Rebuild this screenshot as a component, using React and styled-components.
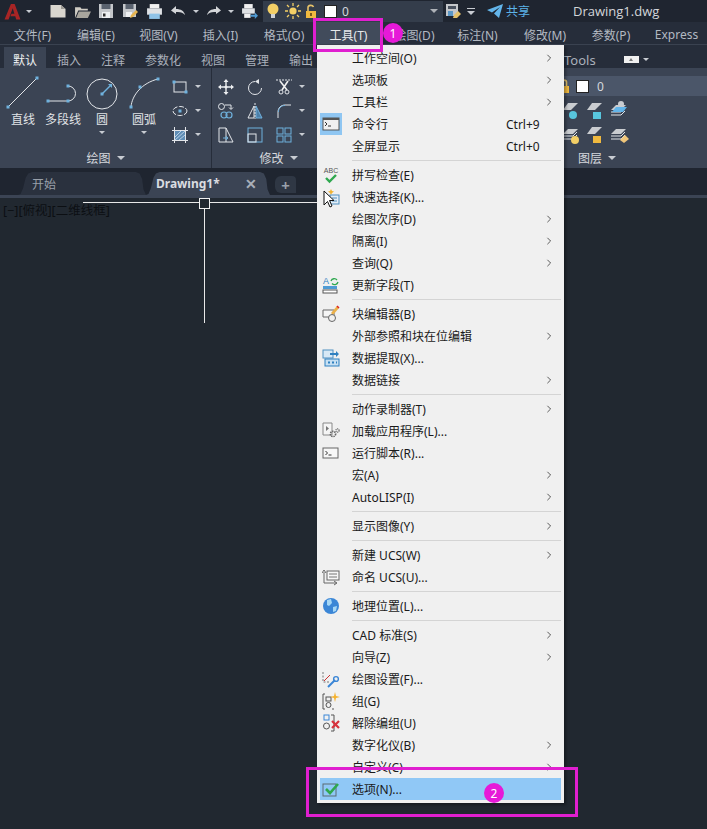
import React from "react";
import styled, { createGlobalStyle } from "styled-components";

const GlobalStyle = createGlobalStyle`
    html, body {
        margin: 0;
        padding: 0;
        background: #212830;
    }
    * {
        box-sizing: border-box;
    }
`;

const Page = styled.div`
    position: relative;
    width: 707px;
    height: 829px;
    overflow: hidden;
    display: flex;
    flex-direction: column;
    background: #212830;
    font-family: "Noto Sans", "Noto Sans CJK SC", sans-serif;
    font-size: 12px;
    color: #c9ced6;
`;

/* ---------- title bar ---------- */
const TitleBar = styled.div`
    height: 22px;
    flex: none;
    display: flex;
    align-items: center;
    background: #1f2530;
`;
const LogoBox = styled.div`
    width: 50px;
    padding-left: 4px;
    display: flex;
    align-items: center;
    gap: 5px;
`;
const Quick = styled.div`
    display: flex;
    align-items: center;
    width: ${(p) => p.$w || 24}px;
`;
const Caret = styled.span`
    display: inline-block;
    flex: none;
    width: 0;
    height: 0;
    margin-left: ${(p) => p.$ml || 0}px;
    border-left: ${(p) => p.$s || 3}px solid transparent;
    border-right: ${(p) => p.$s || 3}px solid transparent;
    border-top: ${(p) => p.$s || 3}px solid ${(p) => p.$c || "#c8ccd2"};
`;
const BigCaret = styled(Caret)`
    margin-top: 3px;
`;
const BarCaret = styled.span`
    display: block;
    width: 8px;
    height: 7px;
    border-top: 1px solid #c8ccd2;
    &::after {
        content: "";
        display: block;
        width: 0;
        height: 0;
        margin-top: 2px;
        border-left: 4px solid transparent;
        border-right: 4px solid transparent;
        border-top: 4px solid #c8ccd2;
    }
`;
const LayerCombo = styled.div`
    width: 180px;
    height: 21px;
    margin-right: 2px;
    padding: 0 5px 0 2px;
    display: flex;
    align-items: center;
    background: #343d4b;
    color: #d5d8dd;
`;
const Swatch = styled.span`
    display: block;
    flex: none;
    width: 13px;
    height: 13px;
    background: #fff;
    border: 1px solid #222;
`;
const ComboValue = styled.span`
    flex: 1;
    padding-left: 5px;
`;
const ShareLabel = styled.span`
    color: #5cb3e8;
    width: 70px;
    padding-left: 3px;
`;
const FileName = styled.span`
    font-size: 13px;
    color: #d3d6da;
    font-family: "Open Sans", "Noto Sans", sans-serif;
`;

/* ---------- menu bar ---------- */
const MenuBar = styled.div`
    height: 23px;
    flex: none;
    display: flex;
    align-items: stretch;
    padding-left: 1px;
    background: #262d3a;
    border-bottom: 1px solid #3a4250;
`;
const MenuEntry = styled.div`
    display: flex;
    align-items: center;
    justify-content: center;
    white-space: nowrap;
    padding-top: 3px;
    width: ${(p) => p.$w}px;
    flex: none;
    color: ${(p) => (p.$active ? "#e6e8eb" : "#b3b9c2")};
    background: ${(p) => (p.$active ? "#414b5b" : "transparent")};
`;

/* ---------- ribbon ---------- */
const RibbonTabs = styled.div`
    height: 23px;
    flex: none;
    display: flex;
    gap: 2px;
    padding: 2px 0 0 4px;
    background: #262d3a;
`;
const RibbonTab = styled.div`
    padding: 4px 9px 0;
    display: flex;
    align-items: center;
    white-space: nowrap;
    color: ${(p) => (p.$active ? "#eef0f2" : "#aab0ba")};
    background: ${(p) => (p.$active ? "#3b4454" : "transparent")};
`;
const TabsTail = styled.div`
    margin-left: auto;
    width: 143px;
    padding-top: 4px;
    display: flex;
    align-items: center;
    color: #aab0ba;
    font-size: 13px;
`;
const MiniPill = styled.span`
    display: flex;
    align-items: center;
    justify-content: center;
    width: 15px;
    height: 7px;
    margin: 0 4px 0 28px;
    background: #f0f0f0;
    &::after {
        content: "";
        border-left: 2px solid transparent;
        border-right: 2px solid transparent;
        border-bottom: 3px solid #777;
    }
`;
const Ribbon = styled.div`
    height: 100px;
    flex: none;
    display: flex;
    background: #3b4454;
`;
const Panel = styled.div`
    width: ${(p) => p.$w}px;
    flex: none;
    display: flex;
    flex-direction: column;
    border-right: ${(p) => (p.$divider ? "1px solid #262d3a" : "none")};
`;
const PanelBody = styled.div`
    flex: 1;
    display: flex;
    align-items: flex-start;
    padding-left: ${(p) => p.$pl || 0}px;
`;
const PanelTitle = styled.div`
    height: 20px;
    flex: none;
    display: flex;
    align-items: center;
    justify-content: ${(p) => (p.$start ? "flex-start" : "center")};
    gap: 6px;
    color: #d5d8dd;
    padding-left: ${(p) => p.$pl || 0}px;
`;
const BigTool = styled.div`
    width: ${(p) => p.$w}px;
    flex: none;
    display: flex;
    flex-direction: column;
    align-items: center;
    padding-top: 6px;
    color: #e0e3e6;
    white-space: nowrap;
    line-height: 16px;
`;
const BigIcon = styled.svg`
    display: block;
    width: 40px;
    height: 38px;
`;
const SmallGrid = styled.div`
    display: grid;
    grid-template-columns: repeat(${(p) => p.$cols}, auto);
    column-gap: ${(p) => p.$gap || 0}px;
    row-gap: 7px;
    padding-top: 10px;
    margin-left: ${(p) => p.$ml || 0}px;
`;
const SmallTool = styled.div`
    display: flex;
    align-items: center;
    gap: 7px;
    height: 17px;
`;
const Ic = styled.svg`
    display: block;
    flex: none;
    width: ${(p) => p.$size || 16}px;
    height: ${(p) => p.$size || 16}px;
`;
const Spacer = styled.div`
    flex: 1;
`;
const LayerRow = styled.div`
    margin-top: 8px;
    height: 20px;
    flex: none;
    display: flex;
    align-items: center;
    gap: 5px;
    background: #4b5669;
    color: #d5d8dd;
    & > svg {
        margin-left: -7px;
    }
`;
const LayerIcons = styled.div`
    flex: 1;
    display: grid;
    grid-template-columns: repeat(3, 24px);
    grid-auto-rows: 24px;
    margin-left: -3px;
    padding-top: 3px;
    align-items: center;
    justify-items: center;
`;

/* ---------- document tabs ---------- */
const DocTabs = styled.div`
    height: 27px;
    flex: none;
    display: flex;
    align-items: flex-end;
    padding-left: 18px;
    background: #1f2530;
`;
const DocTab = styled.div`
    height: 23px;
    width: ${(p) => p.$w}px;
    flex: none;
    display: flex;
    align-items: center;
    gap: 25px;
    padding-left: ${(p) => p.$pl}px;
    background: ${(p) => (p.$active ? "#3b4454" : "#2a313e")};
    color: ${(p) => (p.$active ? "#d9dce0" : "#99a0aa")};
    font-weight: ${(p) => (p.$active ? 700 : 400)};
    clip-path: polygon(0 100%, 2% 96%, 4% 70%, 6% 25%, 8% 6%, 11% 0, 92% 0, 95% 6%, 97% 30%, 98% 75%, 100% 100%);
`;
const CloseMark = styled.span`
    font-size: 14px;
    font-weight: 700;
    color: #a9afb8;
`;
const PlusTab = styled.div`
    height: 17px;
    width: 21px;
    margin: 0 0 2px 5px;
    display: flex;
    align-items: center;
    justify-content: center;
    border-radius: 6px 4px 0 6px;
    background: #2f3744;
    color: #9aa1ab;
    font-size: 15px;
    font-weight: 700;
`;
const TabStrip = styled.div`
    height: 3px;
    flex: none;
    background: #3b4454;
`;

/* ---------- canvas ---------- */
const Canvas = styled.div`
    flex: 1;
    position: relative;
    background: #212830;
`;
const ViewLabel = styled.div`
    padding: 5px 0 0 3px;
    color: #0c0f13;
    font-size: 12.5px;
    line-height: 16px;
`;
const CrossH = styled.div`
    position: absolute;
    left: 83px;
    top: 4px;
    width: 240px;
    height: 1px;
    background: #e8e8e8;
`;
const CrossV = styled.div`
    position: absolute;
    left: 204px;
    top: 5px;
    width: 1px;
    height: 120px;
    background: #e8e8e8;
`;
const PickBox = styled.div`
    position: absolute;
    left: 199px;
    top: 0;
    width: 11px;
    height: 11px;
    border: 1px solid #f0f0f0;
    background: #212830;
`;

/* ---------- drop-down menu ---------- */
const Dropdown = styled.div`
    position: absolute;
    left: 317px;
    top: 45px;
    width: 247px;
    height: 758px;
    padding: 2px 3px;
    background: #f0f0f0;
    color: #1a1a1a;
    box-shadow: 2px 2px 3px rgba(0, 0, 0, 0.35);
`;
const Item = styled.div`
    height: 22px;
    display: flex;
    align-items: center;
    background: ${(p) => (p.$hot ? "#90c8f6" : "transparent")};
`;
const ItemIcon = styled.div`
    width: 32px;
    flex: none;
    display: flex;
    justify-content: center;
    padding-right: 10px;
`;
const ItemLabel = styled.span`
    flex: 1;
    white-space: nowrap;
`;
const ItemShortcut = styled.span`
    width: 55px;
    flex: none;
`;
const ItemArrow = styled.span`
    width: 16px;
    flex: none;
    display: flex;
`;
const Separator = styled.div`
    height: 1px;
    margin: 3px 0 3px 32px;
    background: #d4d4d4;
`;

/* ---------- annotations ---------- */
const Callout = styled.div`
    position: absolute;
    left: ${(p) => p.$x}px;
    top: ${(p) => p.$y}px;
    width: ${(p) => p.$w}px;
    height: ${(p) => p.$h}px;
    border: 3px solid #e01fd0;
`;
const Badge = styled.div`
    position: absolute;
    left: ${(p) => p.$x}px;
    top: ${(p) => p.$y}px;
    width: 20px;
    height: 20px;
    border-radius: 50%;
    display: flex;
    align-items: center;
    justify-content: center;
    background: #e619d8;
    color: #fff;
    font-size: 12px;
`;
const Pointer = styled.svg`
    position: absolute;
    left: 323px;
    top: 190px;
    width: 12px;
    height: 18px;
`;

/* ---------- icons ---------- */
const S = { fill: "none", stroke: "#e3e6ea", strokeWidth: 1 };
const B = "#6fb1dd";
const Dot = ({ x, y }) => <rect x={x - 1.5} y={y - 1.5} width="3" height="3" fill={B} />;

const Logo = () => (
    <Ic viewBox="0 0 16 16" $size={17}>
        <path d="M0.5 15.5 L6.5 1 H10 L15.5 15.5 H11.5 L10.6 12.5 H6 L7 10 H9.8 L8.2 5 L4.3 15.5 Z" fill="#a82525" />
    </Ic>
);
const NewIcon = () => (
    <Ic viewBox="0 0 16 16"><path d="M0.5 2 H11 L15.5 6 V14.5 H0.5 Z" fill="#d9d6cf" /><path d="M11 2 V6 H15.5" fill="#9c9a94" /></Ic>
);
const OpenIcon = () => (
    <Ic viewBox="0 0 16 16" $size={17}><path d="M1 4 H6 L7 5.5 H13 V7 H4 L1 14 Z" fill="#cfccc4" /><path d="M4.5 8 H16 L13 14 H2 Z" fill="#a8a59d" /></Ic>
);
const SaveIcon = () => (
    <Ic viewBox="0 0 16 16"><path d="M1 1 H15 V15 H1 Z" fill="#c4c7cb" /><rect x="3.5" y="1" width="9" height="5" fill="#59626f" /><rect x="4" y="9" width="8" height="6" fill="#eef0f2" /><rect x="5" y="10.5" width="2.5" height="3" fill="#333" /></Ic>
);
const SaveAsIcon = () => (
    <Ic viewBox="0 0 16 16"><path d="M1 1 H14 V14 H1 Z" fill="#c4c7cb" /><rect x="3.5" y="1" width="8" height="5" fill="#59626f" /><rect x="4" y="9" width="6" height="5" fill="#eef0f2" /><path d="M8 15 L9 12 L14 7 L16 9 L11 14 Z" fill="#e6b450" /></Ic>
);
const PlotIcon = () => (
    <Ic viewBox="0 0 16 16" $size={17}><rect x="3.5" y="1" width="9" height="4" fill="#f1f1f1" /><rect x="1" y="5" width="14" height="6" fill="#dfe2e5" /><rect x="3" y="10" width="10" height="5" fill="#8fc3e8" /></Ic>
);
const UndoIcon = () => (
    <Ic viewBox="0 0 16 16"><path d="M6 3 L1 7.5 L6 11 V9 C10 8.5 13 9.5 15 12 C14 8 11 6 6 6 Z" fill="#d4d6d9" /></Ic>
);
const RedoIcon = () => (
    <Ic viewBox="0 0 16 16"><path d="M10 3 L15 7.5 L10 11 V9 C6 8.5 3 9.5 1 12 C2 8 5 6 10 6 Z" fill="#d4d6d9" /></Ic>
);
const PreviewIcon = () => (
    <Ic viewBox="0 0 16 16" $size={17}><rect x="3" y="1" width="8" height="4" fill="#f1f1f1" /><rect x="1" y="5" width="12" height="5" fill="#dfe2e5" /><rect x="3" y="10" width="6" height="4" fill="#f1f1f1" /><path d="M9 11 H13 V9 L16 12 L13 15 V13 H9 Z" fill="#4f9bd4" /></Ic>
);
const BulbIcon = () => (
    <Ic viewBox="0 0 16 16"><circle cx="8" cy="6" r="5.5" fill="#f3cf66" /><rect x="6" y="11" width="4" height="4" fill="#cfd2d6" /></Ic>
);
const SunIcon = () => (
    <Ic viewBox="0 0 16 16"><circle cx="8" cy="8" r="3.6" fill="#f3cf66" /><path d="M8 0 V3 M8 13 V16 M0 8 H3 M13 8 H16 M2 2 L4 4 M12 12 L14 14 M14 2 L12 4 M4 12 L2 14" stroke="#f3cf66" strokeWidth="1.3" /></Ic>
);
const LockIcon = () => (
    <Ic viewBox="0 0 14 14" $size={14}><path d="M3 7 V3.5 C3 1 7.5 0.5 8.5 3" fill="none" stroke="#e6c26a" strokeWidth="1.6" /><rect x="1" y="7" width="10" height="7" fill="#f0b93f" /><rect x="5" y="9" width="2" height="3" fill="#7a5a1c" /></Ic>
);
const LayerLockIcon = () => (
    <Ic viewBox="0 0 14 14" $size={14}><path d="M4 7 V3 C4 0.5 9.5 0.5 9.5 3 V7" fill="none" stroke="#e6c26a" strokeWidth="1.6" /><rect x="2" y="7" width="10" height="7" fill="#f0b93f" /></Ic>
);
const SaveEditIcon = () => (
    <Ic viewBox="0 0 16 16"><rect x="1" y="1" width="12" height="12" fill="#c4c7cb" /><rect x="3" y="3" width="8" height="3" fill="#49525f" /><rect x="3" y="8" width="5" height="5" fill="#5b97c5" /><path d="M8 15 L9 12 L13 8 L16 11 L12 15 Z" fill="#e6c26a" /></Ic>
);
const ShareIcon = () => (
    <Ic viewBox="0 0 16 16"><path d="M0 7 L16 1 L12 15 L7 10.5 L13 4 L5 9.5 Z" fill="#63b5ea" /></Ic>
);
const LineIcon = () => (
    <BigIcon viewBox="0 0 40 38"><path d="M5 33 L34 4" {...S} /><Dot x={5} y={33} /><Dot x={34} y={4} /></BigIcon>
);
const PolylineIcon = () => (
    <BigIcon viewBox="0 0 40 38"><path d="M5 27 H25 A7.5 7.5 0 0 0 25 12" {...S} /><Dot x={5} y={27} /><Dot x={25} y={27} /><Dot x={25} y={12} /></BigIcon>
);
const CircleIcon = () => (
    <BigIcon viewBox="0 0 40 38"><circle cx="20" cy="20" r="15" {...S} /><path d="M20 20 L29 11" stroke={B} strokeWidth="1.4" /><path d="M26 10 H30 V14 Z" fill={B} /><Dot x={20} y={20} /></BigIcon>
);
const ArcIcon = () => (
    <BigIcon viewBox="0 0 40 38"><path d="M7 33 C8 21 18 9 34 5" {...S} /><Dot x={7} y={33} /><Dot x={16} y={13} /><Dot x={34} y={5} /></BigIcon>
);
const RectIcon = () => (
    <Ic viewBox="0 0 16 16"><rect x="2" y="3" width="12" height="10" {...S} /><Dot x={2} y={3} /><Dot x={14} y={13} /></Ic>
);
const EllipseIcon = () => (
    <Ic viewBox="0 0 16 16"><ellipse cx="8" cy="8" rx="7" ry="4.5" {...S} strokeDasharray="5 1.5" /><Dot x={8} y={8} /></Ic>
);
const HatchIcon = () => (
    <Ic viewBox="0 0 16 16"><path d="M3 4 H13 V13 H3 Z" fill="#5f8db5" /><path d="M3 10 L9 4 M3 13 L13 4 M7 13 L13 8" stroke="#cfe2f2" strokeWidth="0.8" /><path d="M0 3.5 H16 M0 13.5 H16 M2.5 0 V16 M13.5 0 V16" {...S} /></Ic>
);
const MoveIcon = () => (
    <Ic viewBox="0 0 16 16"><path d="M8 2 V14 M2 8 H14" stroke="#eceef0" strokeWidth="1.4" /><path d="M8 0 L10.5 3 H5.5 Z M8 16 L10.5 13 H5.5 Z M0 8 L3 5.5 V10.5 Z M16 8 L13 5.5 V10.5 Z" fill="#eceef0" /><circle cx="8" cy="8" r="1.5" fill="#eceef0" /></Ic>
);
const RotateIcon = () => (
    <Ic viewBox="0 0 16 16"><path d="M8 2.5 A6.5 6.5 0 1 0 14.5 9" {...S} /><path d="M12 0 L8 2.5 L12 5 Z" fill="#e3e6ea" /></Ic>
);
const TrimIcon = () => (
    <Ic viewBox="0 0 16 16"><path d="M0 1 H16" stroke="#e3e6ea" strokeDasharray="2 1" /><path d="M4 2 L11 11 M12 2 L6 11" stroke="#f0f0f0" strokeWidth="1.6" /><circle cx="5" cy="13" r="2" {...S} /><circle cx="11" cy="13" r="2" {...S} /></Ic>
);
const CopyIcon = () => (
    <Ic viewBox="0 0 16 16"><circle cx="3.5" cy="3.5" r="3" {...S} /><path d="M7 2 H13 V6 M11 4.5 L13 6.5 L15 4.5" {...S} /><circle cx="6" cy="12" r="3" stroke={B} fill="none" strokeWidth="1.2" /><circle cx="11" cy="12" r="3" stroke={B} fill="none" strokeWidth="1.2" /></Ic>
);
const MirrorIcon = () => (
    <Ic viewBox="0 0 16 16"><path d="M7 3 L1 15 H7 Z" {...S} /><path d="M9 3 L15 15 H9 Z" fill="#4d7fa8" stroke={B} /><path d="M8 0 V16" stroke="#e3e6ea" strokeDasharray="2 1" /></Ic>
);
const FilletIcon = () => (
    <Ic viewBox="0 0 16 16"><path d="M2 15 V9 C2 5 5 2 9 2 H15" {...S} /><path d="M2.5 9 C2.5 5 5 2.5 9 2.5" stroke={B} fill="none" /></Ic>
);
const StretchIcon = () => (
    <Ic viewBox="0 0 16 16"><path d="M1 1 H8 V15 H1 Z M8 1 L15 15 H8" {...S} /><path d="M5 11 H10 M8 9 L10 11 L8 13" stroke={B} fill="none" /></Ic>
);
const ScaleIcon = () => (
    <Ic viewBox="0 0 16 16"><rect x="1" y="1" width="14" height="14" stroke={B} fill="none" /><rect x="1" y="7" width="8" height="8" {...S} /></Ic>
);
const ArrayIcon = () => (
    <Ic viewBox="0 0 16 16"><rect x="1" y="1" width="6" height="6" stroke={B} fill="none" /><rect x="9" y="1" width="6" height="6" stroke={B} fill="none" /><rect x="1" y="9" width="6" height="6" stroke={B} fill="none" /><rect x="9" y="9" width="6" height="6" stroke={B} fill="none" /></Ic>
);
const LayerTop = ({ children }) => (
    <Ic viewBox="0 0 20 20" $size={20}><path d="M5 2 H15 L8 9 H0 Z" fill="#c9ccd0" />{children}</Ic>
);
const LayerStack = ({ children }) => (
    <Ic viewBox="0 0 20 20" $size={20}><path d="M5 4 H15 L10 9 H0 Z" fill="#c9ccd0" /><path d="M0 11 H10 L14 7 M0 14 H10 L14 10" stroke="#e3e6ea" fill="none" />{children}</Ic>
);

const CmdIcon = () => (
    <Ic viewBox="0 0 22 22" $size={22}><rect width="22" height="22" fill="#8fc6f2" /><rect x="3" y="5" width="16" height="12" fill="#f0f0f0" stroke="#555" /><rect x="3" y="5" width="16" height="2" fill="#555" /><path d="M5 9 L7 11 L5 13 M8 13 H11" stroke="#333" fill="none" /></Ic>
);
const SpellIcon = () => (
    <Ic viewBox="0 0 18 18" $size={18}><text x="9" y="7" textAnchor="middle" fontSize="7" fontFamily="Liberation Sans, sans-serif" fill="#555">ABC</text><path d="M4 12 L7.5 15.5 L14 9" stroke="#2fa84f" strokeWidth="2.4" fill="none" /></Ic>
);
const QuickSelIcon = () => (
    <Ic viewBox="0 0 18 18" $size={18}><path d="M9 1 L10 3 L12 3.5 L10 5 L9 7 L8 5 L6 3.5 L8 3 Z" fill="#f1b433" /><rect x="8" y="7" width="9" height="9" fill="#e4eef6" stroke="#4f8fc0" /><path d="M10 10 H15 M10 13 H15" stroke="#4f8fc0" /></Ic>
);
const FieldIcon = () => (
    <Ic viewBox="0 0 18 18" $size={18}><text x="1" y="8" fontSize="9" fontFamily="Liberation Sans, sans-serif" fill="#2f80c0">A</text><path d="M9 5 A3.5 3.5 0 0 1 15 4 M16 6 A3.5 3.5 0 0 1 10 7.5" stroke="#2fa84f" strokeWidth="1.3" fill="none" /><rect x="1" y="10" width="14" height="3" fill="#4f9bd4" /><rect x="1" y="14" width="14" height="3" fill="#fff" stroke="#555" /></Ic>
);
const BlockIcon = () => (
    <Ic viewBox="0 0 18 18" $size={18}><path d="M1 5 H12 V12 H1 Z" fill="#f5f5f5" stroke="#666" /><path d="M9 8 L15 1 L17 3 L11 10 Z" fill="#eab04a" /><path d="M15 1 L17 3" stroke="#d22" strokeWidth="1.5" /><circle cx="10" cy="13" r="3.5" fill="#f0f0f0" stroke="#666" /></Ic>
);
const ExtractIcon = () => (
    <Ic viewBox="0 0 18 18" $size={18}><rect x="1" y="1" width="10" height="8" fill="#d7e8f5" stroke="#4f8fc0" /><path d="M8 4 H14 V2 L17 5 L14 8 V6 H8 Z" fill="#2f80c0" /><rect x="3" y="10" width="14" height="7" fill="#c7e0f3" stroke="#2f80c0" /><path d="M6 13.5 H8 M10 13.5 H12 M14 13.5 H15" stroke="#2f80c0" strokeWidth="2" /></Ic>
);
const AppLoadIcon = () => (
    <Ic viewBox="0 0 18 18" $size={18}><path d="M1 1 H10 V13 H1 Z" fill="#f5f5f5" stroke="#888" /><path d="M4 4 L7 6.5 L4 9 Z" fill="#777" /><circle cx="11" cy="12" r="2.6" fill="none" stroke="#666" strokeWidth="1.6" strokeDasharray="1.4 0.8" /><circle cx="15.5" cy="8.5" r="1.6" fill="none" stroke="#666" strokeWidth="1.2" strokeDasharray="1 0.6" /></Ic>
);
const ScriptIcon = () => (
    <Ic viewBox="0 0 18 18" $size={18}><rect x="1" y="4" width="15" height="10" fill="#f7f7f7" stroke="#666" /><path d="M3.5 7 L5.5 9 L3.5 11 M6.5 11 H9.5" stroke="#333" fill="none" /></Ic>
);
const UcsIcon = () => (
    <Ic viewBox="0 0 18 18" $size={18}><path d="M2 4 V15 H14" stroke="#666" fill="none" /><path d="M0 5 L2 2 L4 5 M12 13 L15 15 L12 17" stroke="#666" fill="none" /><rect x="5" y="3" width="12" height="9" fill="#f7f7f7" stroke="#666" /><path d="M7 6 H15 M7 9 H15" stroke="#777" /></Ic>
);
const GlobeIcon = () => (
    <Ic viewBox="0 0 18 18" $size={18}><circle cx="9" cy="9" r="8" fill="#3b86d6" /><path d="M5 3 L9 2 L10 6 L7 9 L5 8 Z M11 10 L15 9 L14 14 L11 15 Z" fill="#a6d7f5" /></Ic>
);
const SettingsIcon = () => (
    <Ic viewBox="0 0 18 18" $size={18}><path d="M1 2 V12 H8" stroke="#777" strokeDasharray="2 1.5" fill="none" /><path d="M2 11 L8 5" stroke="#c33" /><path d="M6 17 L13 10" stroke="#3b86d6" strokeWidth="2" /><circle cx="14" cy="9" r="2.4" fill="none" stroke="#3b86d6" strokeWidth="1.4" /></Ic>
);
const GroupIcon = () => (
    <Ic viewBox="0 0 18 18" $size={18}><path d="M3 2 H1 V17 H3 M10 17 H12" stroke="#555" fill="none" /><rect x="4" y="5" width="5" height="4" fill="none" stroke="#555" /><circle cx="6.5" cy="13" r="2.5" fill="none" stroke="#555" /><path d="M13 0 L14 4 L18 5 L14 6 L13 10 L12 6 L8 5 L12 4 Z" fill="#f5b22e" /></Ic>
);
const UngroupIcon = () => (
    <Ic viewBox="0 0 18 18" $size={18}><rect x="2" y="1" width="5" height="5" fill="none" stroke="#3b86d6" /><circle cx="4.5" cy="12" r="3" fill="none" stroke="#555" /><path d="M9 1 H12 V17 H9" stroke="#555" fill="none" /><path d="M10 7 L17 14 M17 7 L10 14" stroke="#d8323c" strokeWidth="2.2" /></Ic>
);
const OptionsIcon = () => (
    <Ic viewBox="0 0 18 18" $size={18}><rect x="1" y="4" width="13" height="12" fill="none" stroke="#5a6a72" /><path d="M4 9 L8 13 L16 4" stroke="#2fa84f" strokeWidth="2.6" fill="none" /></Ic>
);
const ChevronIcon = () => (
    <Ic viewBox="0 0 6 10" $size={8}><path d="M1 1 L5 5 L1 9" stroke="#333" fill="none" /></Ic>
);

const menuEntries = [
    { label: "文件(F)", w: 63 },
    { label: "编辑(E)", w: 64 },
    { label: "视图(V)", w: 61 },
    { label: "插入(I)", w: 63 },
    { label: "格式(O)", w: 64 },
    { label: "工具(T)", w: 65, active: true },
    { label: "绘图(D)", w: 67 },
    { label: "标注(N)", w: 59 },
    { label: "修改(M)", w: 76 },
    { label: "参数(P)", w: 56 },
    { label: "Express", w: 75 },
];
const ribbonTabs = ["默认", "插入", "注释", "参数化", "视图", "管理", "输出"];
const drawSmall = [RectIcon, EllipseIcon, HatchIcon];
const modifySmall = [
    [MoveIcon, false], [RotateIcon, false], [TrimIcon, true],
    [CopyIcon, false], [MirrorIcon, false], [FilletIcon, true],
    [StretchIcon, false], [ScaleIcon, false], [ArrayIcon, true],
];

const menuGroups = [
    [
        { label: "工作空间(O)", arrow: true },
        { label: "选项板", arrow: true },
        { label: "工具栏", arrow: true },
        { label: "命令行", shortcut: "Ctrl+9", icon: CmdIcon },
        { label: "全屏显示", shortcut: "Ctrl+0" },
    ],
    [
        { label: "拼写检查(E)", icon: SpellIcon },
        { label: "快速选择(K)...", icon: QuickSelIcon },
        { label: "绘图次序(D)", arrow: true },
        { label: "隔离(I)", arrow: true },
        { label: "查询(Q)", arrow: true },
        { label: "更新字段(T)", icon: FieldIcon },
    ],
    [
        { label: "块编辑器(B)", icon: BlockIcon },
        { label: "外部参照和块在位编辑", arrow: true },
        { label: "数据提取(X)...", icon: ExtractIcon },
        { label: "数据链接", arrow: true },
    ],
    [
        { label: "动作录制器(T)", arrow: true },
        { label: "加载应用程序(L)...", icon: AppLoadIcon },
        { label: "运行脚本(R)...", icon: ScriptIcon },
        { label: "宏(A)", arrow: true },
        { label: "AutoLISP(I)", arrow: true },
    ],
    [{ label: "显示图像(Y)", arrow: true }],
    [
        { label: "新建 UCS(W)", arrow: true },
        { label: "命名 UCS(U)...", icon: UcsIcon },
    ],
    [{ label: "地理位置(L)...", icon: GlobeIcon }],
    [
        { label: "CAD 标准(S)", arrow: true },
        { label: "向导(Z)", arrow: true },
        { label: "绘图设置(F)...", icon: SettingsIcon },
        { label: "组(G)", icon: GroupIcon },
        { label: "解除编组(U)", icon: UngroupIcon },
        { label: "数字化仪(B)", arrow: true },
        { label: "自定义(C)", arrow: true },
        { label: "选项(N)...", icon: OptionsIcon, hot: true },
    ],
];

const App = () => {
    return (
        <Page>
            <GlobalStyle />
            <TitleBar>
                <LogoBox>
                    <Logo />
                    <Caret />
                </LogoBox>
                <Quick><NewIcon /></Quick>
                <Quick><OpenIcon /></Quick>
                <Quick><SaveIcon /></Quick>
                <Quick><SaveAsIcon /></Quick>
                <Quick><PlotIcon /></Quick>
                <Quick $w={36}><UndoIcon /><Caret $ml={7} /></Quick>
                <Quick $w={35}><RedoIcon /><Caret $ml={6} /></Quick>
                <Quick $w={22}><PreviewIcon /></Quick>
                <LayerCombo>
                    <Quick $w={20}><BulbIcon /></Quick>
                    <Quick $w={20}><SunIcon /></Quick>
                    <Quick $w={19}><LockIcon /></Quick>
                    <Swatch />
                    <ComboValue>0</ComboValue>
                    <Caret $s={4} $c="#aeb2b8" />
                </LayerCombo>
                <Quick $w={22}><SaveEditIcon /></Quick>
                <Quick $w={20}><BarCaret /></Quick>
                <ShareIcon />
                <ShareLabel>共享</ShareLabel>
                <FileName>Drawing1.dwg</FileName>
            </TitleBar>

            <MenuBar>
                {menuEntries.map((entry) => (
                    <MenuEntry key={entry.label} $w={entry.w} $active={entry.active}>
                        {entry.label}
                    </MenuEntry>
                ))}
            </MenuBar>

            <RibbonTabs>
                {ribbonTabs.map((tab, i) => (
                    <RibbonTab key={tab} $active={i === 0}>{tab}</RibbonTab>
                ))}
                <TabsTail>
                    <span>Tools</span>
                    <MiniPill />
                    <Caret />
                </TabsTail>
            </RibbonTabs>

            <Ribbon>
                <Panel $w={212} $divider>
                    <PanelBody $pl={3}>
                        <BigTool $w={40}><LineIcon />直线</BigTool>
                        <BigTool $w={40}><PolylineIcon />多段线</BigTool>
                        <BigTool $w={38}><CircleIcon />圆<BigCaret /></BigTool>
                        <BigTool $w={46}><ArcIcon />圆弧<BigCaret /></BigTool>
                        <SmallGrid $cols={1} $ml={5}>
                            {drawSmall.map((Icon, i) => (
                                <SmallTool key={i}><Icon /><Caret /></SmallTool>
                            ))}
                        </SmallGrid>
                    </PanelBody>
                    <PanelTitle>绘图<Caret $s={4} /></PanelTitle>
                </Panel>
                <Panel $w={105}>
                    <PanelBody $pl={6}>
                        <SmallGrid $cols={3} $gap={13}>
                            {modifySmall.map(([Icon, caret], i) => (
                                <SmallTool key={i}><Icon />{caret && <Caret />}</SmallTool>
                            ))}
                        </SmallGrid>
                    </PanelBody>
                    <PanelTitle $pl={28}>修改<Caret $s={4} /></PanelTitle>
                </Panel>
                <Spacer />
                <Panel $w={143}>
                    <LayerRow><LayerLockIcon /><Swatch />&nbsp;0</LayerRow>
                    <LayerIcons>
                        <LayerTop><circle cx="10" cy="14" r="4" fill="#58c6de" /></LayerTop>
                        <LayerTop><rect x="6" y="11" width="8" height="7" fill="#58c6de" /></LayerTop>
                        <LayerStack><circle cx="10" cy="3" r="3" fill="#c9ccd0" /><path d="M5 6 H16 L12 11 H1 Z" fill="#63b5ea" /></LayerStack>
                        <LayerStack><circle cx="12" cy="15" r="4" fill="#f3cf66" /></LayerStack>
                        <LayerTop><rect x="6" y="11" width="8" height="7" fill="#f0b93f" /></LayerTop>
                        <LayerStack><path d="M9 15 L14 10 L18 14 L13 18 Z" fill="#f0c67a" /></LayerStack>
                    </LayerIcons>
                    <PanelTitle $start $pl={14}>图层<Caret $s={4} /></PanelTitle>
                </Panel>
            </Ribbon>

            <DocTabs>
                <DocTab $w={128} $pl={14}>开始</DocTab>
                <DocTab $w={124} $pl={10} $active>
                    Drawing1*
                    <CloseMark>✕</CloseMark>
                </DocTab>
                <PlusTab>+</PlusTab>
            </DocTabs>
            <TabStrip />

            <Canvas>
                <ViewLabel>[−][俯视][二维线框]</ViewLabel>
                <CrossH />
                <CrossV />
                <PickBox />
            </Canvas>

            <Dropdown>
                {menuGroups.map((group, g) => (
                    <React.Fragment key={g}>
                        {g > 0 && <Separator />}
                        {group.map(({ label, shortcut, arrow, icon: Icon, hot }) => (
                            <Item key={label} $hot={hot}>
                                <ItemIcon>{Icon && <Icon />}</ItemIcon>
                                <ItemLabel>{label}</ItemLabel>
                                {shortcut && <ItemShortcut>{shortcut}</ItemShortcut>}
                                {arrow && <ItemArrow><ChevronIcon /></ItemArrow>}
                            </Item>
                        ))}
                    </React.Fragment>
                ))}
            </Dropdown>

            <Pointer viewBox="0 0 12 18">
                <path d="M1 1 V15 L4.5 11.5 L7 17 L9 16 L6.5 10.5 H11 Z" fill="#fff" stroke="#111" />
            </Pointer>
            <Callout $x={313} $y={18} $w={70} $h={34} />
            <Badge $x={383} $y={23}>1</Badge>
            <Callout $x={306} $y={767} $w={272} $h={50} />
            <Badge $x={484} $y={783}>2</Badge>
        </Page>
    );
};

export default App;
